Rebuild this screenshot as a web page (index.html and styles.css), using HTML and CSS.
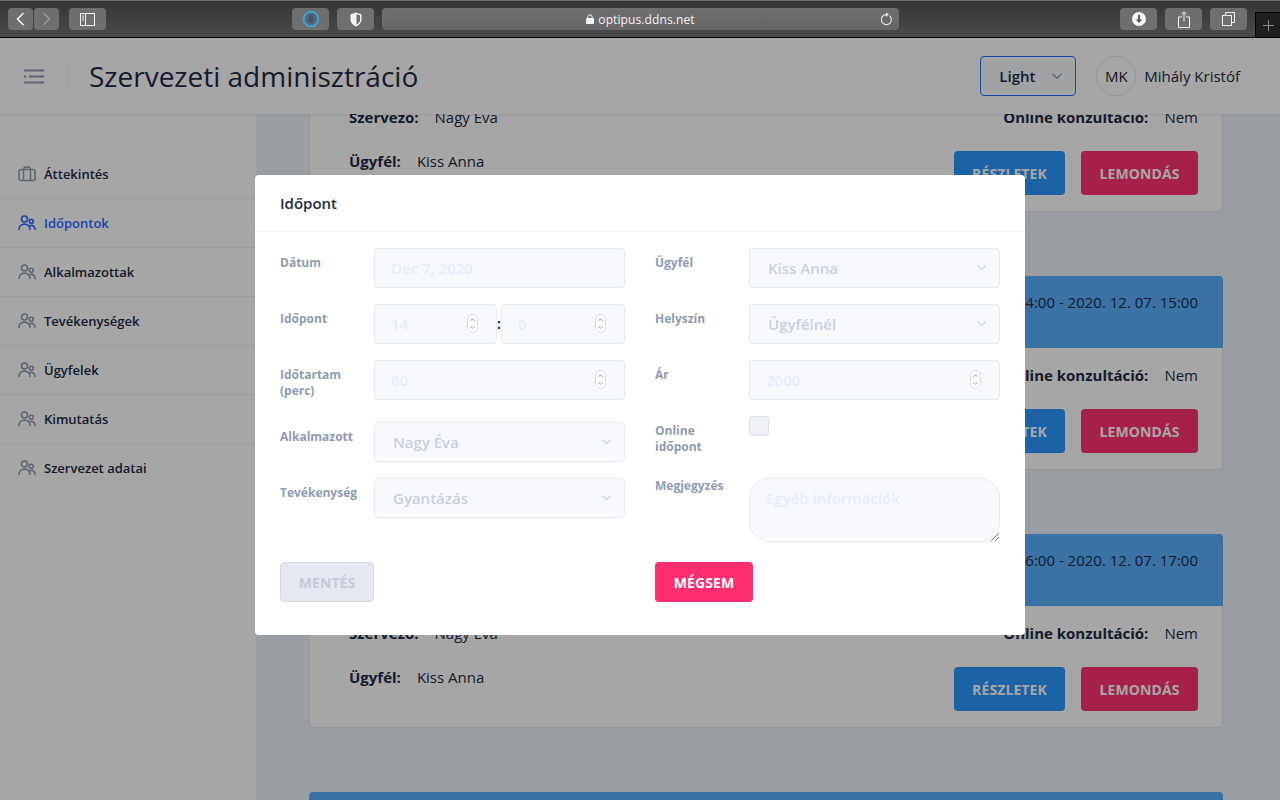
FILE: index.html
```html
<!DOCTYPE html>
<html lang="hu">
<head>
    <meta charset="UTF-8">
    <title>Szervezeti adminisztráció</title>
    <link rel="stylesheet" href="styles.css">
</head>
<body>
    <svg class="defs">
        <symbol id="people" viewBox="0 0 18 18">
            <circle cx="6.5" cy="5" r="3" fill="none" stroke="currentColor" stroke-width="1.6"/>
            <circle cx="13.3" cy="7.3" r="2" fill="none" stroke="currentColor" stroke-width="1.6"/>
            <path d="M1 15.5c0-3.4 2.4-5.4 5.5-5.4s5.500 2 5.500 5.400M12.200 11.500c2.600-.6 4.800.8 4.800 4" fill="none" stroke="currentColor" stroke-width="1.6" stroke-linecap="round"/>
        </symbol>
        <symbol id="chevron" viewBox="0 0 11 7">
            <path d="M1 1l4.500 4.500L10 1" fill="none" stroke="currentColor" stroke-width="1.5" stroke-linecap="round" stroke-linejoin="round"/>
        </symbol>
        <symbol id="spinner" viewBox="0 0 11 19">
            <rect x=".5" y=".5" width="10" height="18" rx="5" fill="#fff" stroke="#d5d9e2"/>
            <path d="M3.200 7l2.300-2.300L7.800 7M3.200 12l2.300 2.300L7.800 12" fill="none" stroke="#8a8f99" stroke-width=".9"/>
        </symbol>
    </svg>

    <div class="browser-bar">
        <div class="nav-buttons">
            <button class="bar-btn nav-btn"><svg width="9" height="14" viewBox="0 0 9 14"><path d="M7.500 1L1.500 7l6 6" fill="none" stroke="#fff" stroke-width="1.4"/></svg></button>
            <button class="bar-btn nav-btn"><svg width="9" height="14" viewBox="0 0 9 14"><path d="M1.500 1l6 6-6 6" fill="none" stroke="#9c9c9c" stroke-width="1.4"/></svg></button>
        </div>
        <button class="bar-btn wide-btn sidebar-btn"><svg width="15" height="13" viewBox="0 0 15 13"><rect x=".5" y=".5" width="14" height="12" fill="none" stroke="#f2f2f2"/><path d="M5.500 .5v12M2 3h2M2 5h2M2 7h2" stroke="#f2f2f2" fill="none"/></svg></button>
        <button class="bar-btn wide-btn ext-btn"><svg width="16" height="16" viewBox="0 0 16 16"><path d="M5 1h6l4 4v6l-4 4H5l-4-4V5z" fill="#556a7c" stroke="#35aeea" stroke-width="1.6"/><ellipse cx="8" cy="8" rx="2.800" ry="4" fill="#47535e"/></svg></button>
        <button class="bar-btn wide-btn ext-btn2"><svg width="12" height="15" viewBox="0 0 12 15"><path d="M6 .5l5.500 2v5c0 3.500-2.500 5.500-5.500 7-3-1.500-5.500-3.500-5.500-7v-5z" fill="#f2f2f2"/><path d="M6.500 2.200l3.600 1.300v4c0 2.500-1.600 4-3.600 5.200z" fill="#6e6e6e"/></svg></button>
        <div class="url-bar">
            <span class="url-text">
                <svg width="8" height="10" viewBox="0 0 8 10"><path d="M1.800 4.500V3a2.200 2.200 0 014.400 0v1.500" fill="none" stroke="#f2f2f2"/><rect y="4" width="8" height="6" rx="1" fill="#f2f2f2"/></svg>
                optipus.ddns.net
            </span>
            <svg class="reload" width="12" height="14" viewBox="0 0 12 14"><path d="M8.800 4a5 5 0 11-3.300-1.400" fill="none" stroke="#e8e8e8" stroke-width="1.100"/><path d="M5 .3L8 2.600 5 4.800z" fill="#e8e8e8"/></svg>
        </div>
        <button class="bar-btn wide-btn dl-btn"><svg width="14" height="14" viewBox="0 0 14 14"><circle cx="7" cy="7" r="7" fill="#f5f5f5"/><path d="M7 3v6.500" stroke="#555" stroke-width="2" fill="none"/><path d="M3.800 7.500h6.400L7 11z" fill="#555"/></svg></button>
        <button class="bar-btn wide-btn share-btn"><svg width="12" height="17" viewBox="0 0 12 17"><path d="M6 10.500V1M3.500 3.300L6 .8l2.500 2.500M4 6H.5v10.500h11V6H8" fill="none" stroke="#f0f0f0"/></svg></button>
        <button class="bar-btn wide-btn tabs-btn"><svg width="13" height="14" viewBox="0 0 13 14"><rect x=".5" y="3.500" width="9" height="10" fill="none" stroke="#f0f0f0"/><path d="M3.500 3.500v-3h9v10h-3" fill="none" stroke="#f0f0f0"/></svg></button>
        <div class="new-tab"><svg width="11" height="11" viewBox="0 0 11 11"><path d="M5.500 0v11M0 5.500h11" stroke="#8c8c8c"/></svg></div>
    </div>

    <div class="app">
        <header class="topbar">
            <div class="menu-icon">
                <svg width="20" height="15" viewBox="0 0 20 15"><path d="M0 1.500h20M5 7.500h15M0 13.500h20M0 7.500h2" stroke="#8f9bb3" stroke-width="2"/></svg>
            </div>
            <h1 class="page-title">Szervezeti adminisztráció</h1>
            <div class="theme-select">
                Light
                <svg class="theme-chevron" width="10" height="7"><use href="#chevron"/></svg>
            </div>
            <div class="avatar">MK</div>
            <span class="user-name">Mihály Kristóf</span>
        </header>

        <div class="layout">
            <nav class="sidebar">
                <a class="nav-item">
                    <svg class="nav-icon" width="18" height="18" viewBox="0 0 18 18"><rect x="1" y="4.500" width="16" height="11" rx="2" fill="none" stroke="currentColor" stroke-width="1.500"/><path d="M6 4.500V3.200C6 2.500 6.500 2 7.200 2h3.600c.7 0 1.200.5 1.200 1.200v1.300M5.500 4.500v11M12.500 4.500v11" fill="none" stroke="currentColor" stroke-width="1.500"/></svg>
                    Áttekintés
                </a>
                <a class="nav-item active"><svg class="nav-icon" width="18" height="18"><use href="#people"/></svg>Időpontok</a>
                <a class="nav-item"><svg class="nav-icon" width="18" height="18"><use href="#people"/></svg>Alkalmazottak</a>
                <a class="nav-item"><svg class="nav-icon" width="18" height="18"><use href="#people"/></svg>Tevékenységek</a>
                <a class="nav-item"><svg class="nav-icon" width="18" height="18"><use href="#people"/></svg>Ügyfelek</a>
                <a class="nav-item"><svg class="nav-icon" width="18" height="18"><use href="#people"/></svg>Kimutatás</a>
                <a class="nav-item"><svg class="nav-icon" width="18" height="18"><use href="#people"/></svg>Szervezet adatai</a>
            </nav>

            <main class="content">
                <div class="card-list">
                    <section class="card">
                        <div class="card-head">2020. 12. 07. 12:00 - 2020. 12. 07. 13:00</div>
                        <div class="card-body">
                            <div class="card-left">
                                <div class="info"><b>Szervező:</b>Nagy Éva</div>
                                <div class="info"><b>Ügyfél:</b>Kiss Anna</div>
                            </div>
                            <div class="card-right">
                                <div class="info"><b>Online konzultáció:</b>Nem</div>
                                <div class="card-actions">
                                    <button class="btn btn-info">RÉSZLETEK</button>
                                    <button class="btn btn-danger">LEMONDÁS</button>
                                </div>
                            </div>
                        </div>
                    </section>
                    <section class="card">
                        <div class="card-head">2020. 12. 07. 14:00 - 2020. 12. 07. 15:00</div>
                        <div class="card-body">
                            <div class="card-left">
                                <div class="info"><b>Szervező:</b>Nagy Éva</div>
                                <div class="info"><b>Ügyfél:</b>Kiss Anna</div>
                            </div>
                            <div class="card-right">
                                <div class="info"><b>Online konzultáció:</b>Nem</div>
                                <div class="card-actions">
                                    <button class="btn btn-info">RÉSZLETEK</button>
                                    <button class="btn btn-danger">LEMONDÁS</button>
                                </div>
                            </div>
                        </div>
                    </section>
                    <section class="card">
                        <div class="card-head">2020. 12. 07. 16:00 - 2020. 12. 07. 17:00</div>
                        <div class="card-body">
                            <div class="card-left">
                                <div class="info"><b>Szervező:</b>Nagy Éva</div>
                                <div class="info"><b>Ügyfél:</b>Kiss Anna</div>
                            </div>
                            <div class="card-right">
                                <div class="info"><b>Online konzultáció:</b>Nem</div>
                                <div class="card-actions">
                                    <button class="btn btn-info">RÉSZLETEK</button>
                                    <button class="btn btn-danger">LEMONDÁS</button>
                                </div>
                            </div>
                        </div>
                    </section>
                    <section class="card">
                        <div class="card-head"></div>
                    </section>
                </div>
            </main>
        </div>

        <div class="backdrop">
            <div class="modal">
                <div class="modal-title">Időpont</div>
                <div class="modal-body">
                    <div class="form-grid">
                        <div class="form-col">
                            <div class="form-row">
                                <label class="form-label">Dátum</label>
                                <div class="control input-like">Dec 7, 2020</div>
                            </div>
                            <div class="form-row">
                                <label class="form-label">Időpont</label>
                                <div class="time-group">
                                    <div class="control input-like">14<svg class="spin" width="11" height="19"><use href="#spinner"/></svg></div>
                                    <span class="time-sep">:</span>
                                    <div class="control input-like">0<svg class="spin" width="11" height="19"><use href="#spinner"/></svg></div>
                                </div>
                            </div>
                            <div class="form-row">
                                <label class="form-label">Időtartam (perc)</label>
                                <div class="control input-like">60<svg class="spin" width="11" height="19"><use href="#spinner"/></svg></div>
                            </div>
                            <div class="form-row">
                                <label class="form-label">Alkalmazott</label>
                                <div class="control select-like">Nagy Éva<svg class="chev" width="9" height="6"><use href="#chevron"/></svg></div>
                            </div>
                            <div class="form-row">
                                <label class="form-label">Tevékenység</label>
                                <div class="control select-like">Gyantázás<svg class="chev" width="9" height="6"><use href="#chevron"/></svg></div>
                            </div>
                        </div>
                        <div class="form-col">
                            <div class="form-row">
                                <label class="form-label">Ügyfél</label>
                                <div class="control select-like">Kiss Anna<svg class="chev" width="9" height="6"><use href="#chevron"/></svg></div>
                            </div>
                            <div class="form-row">
                                <label class="form-label">Helyszín</label>
                                <div class="control select-like">Ügyfélnél<svg class="chev" width="9" height="6"><use href="#chevron"/></svg></div>
                            </div>
                            <div class="form-row">
                                <label class="form-label">Ár</label>
                                <div class="control input-like">2000<svg class="spin" width="11" height="19"><use href="#spinner"/></svg></div>
                            </div>
                            <div class="form-row">
                                <label class="form-label">Online időpont</label>
                                <div class="checkbox"></div>
                            </div>
                            <div class="form-row">
                                <label class="form-label form-label-top">Megjegyzés</label>
                                <div class="textarea-like">
                                    Egyéb információk
                                    <svg class="grip" width="8" height="8" viewBox="0 0 8 8"><path d="M0 8l8-8M4 8l4-4" stroke="#555" stroke-width=".8"/></svg>
                                </div>
                            </div>
                        </div>
                    </div>
                    <div class="form-grid form-actions">
                        <div><button class="btn btn-disabled">MENTÉS</button></div>
                        <div><button class="btn btn-cancel">MÉGSEM</button></div>
                    </div>
                </div>
            </div>
        </div>
    </div>
</body>
</html>
```

FILE: styles.css
```css
* {
    box-sizing: border-box;
}
html, body {
    height: 100%;
}
body {
    font-family: "Open Sans", "Liberation Sans", sans-serif;
    margin: 0;
    display: flex;
    flex-direction: column;
    overflow: hidden;
    color: #222b45;
}
button {
    font-family: inherit;
    border: 0;
}
.defs {
    display: none;
}

/* browser toolbar */
.browser-bar {
    height: 38px;
    flex: none;
    display: flex;
    padding-top: 7px;
    background: linear-gradient(#363636, #4b4b4b);
    border-top: 1px solid #6c6c6c;
    border-bottom: 1px solid #000;
}
.bar-btn {
    height: 22px;
    background: #6f6f6f;
    border-radius: 4px;
    display: flex;
    align-items: center;
    justify-content: center;
    padding: 0;
}
.nav-buttons {
    display: flex;
    gap: 1px;
    margin-left: 8px;
}
.nav-btn {
    width: 25px;
}
.wide-btn {
    width: 37px;
}
.sidebar-btn {
    margin-left: 10px;
}
.ext-btn {
    margin-left: 186px;
}
.ext-btn2 {
    margin-left: 8px;
}
.url-bar {
    width: 517px;
    height: 22px;
    margin-left: 8px;
    border-radius: 4px;
    background: linear-gradient(#707070, #666);
    display: flex;
    align-items: center;
    justify-content: center;
    position: relative;
}
.url-text {
    font-size: 12px;
    font-weight: 500;
    letter-spacing: 0.1px;
    color: #f4f4f4;
    display: flex;
    align-items: center;
    gap: 4px;
}
.reload {
    position: absolute;
    right: 6px;
    top: 4px;
}
.dl-btn {
    margin-left: 221px;
}
.share-btn, .tabs-btn {
    margin-left: 8px;
}
.new-tab {
    width: 25px;
    height: 25px;
    margin-left: 8px;
    margin-top: 4px;
    background: #1f1f1f;
    border-top: 1px solid #000;
    border-left: 1px solid #000;
    display: flex;
    align-items: center;
    justify-content: center;
}

/* app */
.app {
    flex: 1;
    position: relative;
    display: flex;
    flex-direction: column;
    overflow: hidden;
    background: #edf1f9;
}
.topbar {
    height: 76px;
    flex: none;
    display: flex;
    align-items: center;
    padding: 0 40px 0 24px;
    background: #fff;
    box-shadow: 0 1px 2px rgba(44, 51, 73, 0.1);
    position: relative;
    z-index: 2;
}
.menu-icon {
    width: 45px;
    height: 22px;
    border-right: 1px solid #edf1f7;
    display: flex;
    align-items: center;
}
.page-title {
    margin: 0 0 0 20px;
    font-size: 28px;
    font-weight: 400;
    flex: 1;
}
.theme-select {
    width: 96px;
    height: 40px;
    padding-left: 18px;
    display: flex;
    align-items: center;
    font-size: 15px;
    font-weight: 600;
    background: #f7f9fc;
    border: 1px solid #3366ff;
    border-radius: 4px;
    position: relative;
}
.theme-chevron {
    position: absolute;
    right: 13px;
    top: 16px;
    color: #8f9bb3;
}
.avatar {
    width: 40px;
    height: 40px;
    margin-left: 20px;
    border: 1px solid #e6e6e6;
    border-radius: 50%;
    font-size: 15px;
    text-align: center;
    line-height: 38px;
}
.user-name {
    margin-left: 8px;
    font-size: 15px;
}

.layout {
    flex: 1;
    display: flex;
    min-height: 0;
}
.sidebar {
    width: 256px;
    flex: none;
    padding-top: 36px;
    background: #fff;
}
.nav-item {
    height: 49px;
    display: flex;
    align-items: center;
    gap: 8px;
    padding: 0 0 1px 18px;
    font-size: 13px;
    font-weight: 600;
    border-bottom: 1px solid #edf1f7;
}
.nav-item:last-child {
    border-bottom: 0;
}
.nav-icon {
    color: #8f9bb3;
}
.nav-item.active, .nav-item.active .nav-icon {
    color: #3366ff;
}

.content {
    flex: 1;
    overflow: hidden;
    padding: 0 57px 0 53px;
}
.card-list {
    margin-top: -96px;
    display: flex;
    flex-direction: column;
    gap: 64px;
}
.card {
    flex: none;
}
.card-head {
    height: 72px;
    padding: 16px 25px 0 0;
    background: #59afff;
    border-radius: 4px 4px 0 0;
    font-size: 15px;
    line-height: 20px;
    text-align: right;
}
.card-body {
    height: 122px;
    padding: 17px 24px 0 39px;
    background: #fff;
    border: 1px solid #e3e6ec;
    border-top: 0;
    border-radius: 0 0 4px 4px;
    display: flex;
    justify-content: space-between;
}
.card-left, .card-right {
    display: flex;
    flex-direction: column;
    gap: 24px;
}
.card-right {
    align-items: flex-end;
}
.info {
    font-size: 15px;
    line-height: 20px;
}
.info b {
    font-weight: 700;
    margin-right: 16px;
}
.card-actions {
    display: flex;
    gap: 16px;
}
.btn {
    height: 44px;
    padding: 0;
    border-radius: 4px;
    font-size: 14px;
    font-weight: 700;
    letter-spacing: 0.1px;
    color: #fff;
}
.btn-info {
    width: 111px;
    background: #2a97ff;
}
.btn-danger {
    width: 117px;
    background: #ff3470;
}

/* modal */
.backdrop {
    position: absolute;
    inset: 0;
    z-index: 5;
    background: rgba(0, 0, 0, 0.35);
    padding-top: 137px;
    display: flex;
    justify-content: center;
    align-items: flex-start;
}
.modal {
    width: 770px;
    height: 460px;
    background: #fff;
    border-radius: 4px;
}
.modal-title {
    height: 57px;
    padding: 18px 25px 0;
    font-size: 15px;
    font-weight: 600;
    line-height: 20px;
    border-bottom: 1px solid #edf1f7;
}
.modal-body {
    padding: 16px 25px 0;
}
.form-grid {
    display: grid;
    grid-template-columns: 345px 345px;
    column-gap: 30px;
}
.form-col {
    display: flex;
    flex-direction: column;
    gap: 16px;
}
.form-row {
    display: flex;
}
.form-label {
    width: 94px;
    flex: none;
    padding: 7px 16px 7px 0;
    font-size: 12px;
    font-weight: 700;
    line-height: 16px;
    color: #8f9bb3;
}
.form-label-top {
    padding-top: 0;
}
.control {
    flex: 1;
    height: 40px;
    display: flex;
    align-items: center;
    justify-content: space-between;
    background: #f7f9fc;
    border: 1px solid #e6eaf2;
    border-radius: 4px;
    font-size: 15px;
    font-weight: 600;
}
.input-like {
    padding: 0 18px 1px 16px;
    color: #e6edfb;
}
.select-like {
    padding: 0 13px 1px 18px;
    color: #c9cfde;
}
.spin, .chev {
    flex: none;
}
.chev {
    color: #c9cfdc;
}
.time-group {
    flex: 1;
    display: grid;
    grid-template-columns: 123px 1fr;
    column-gap: 4px;
    position: relative;
}
.time-sep {
    position: absolute;
    left: 123px;
    width: 4px;
    top: 10px;
    font-size: 14px;
    font-weight: 700;
    line-height: 20px;
    text-align: center;
}
.checkbox {
    width: 20px;
    height: 20px;
    background: #eef0f5;
    border: 1px solid #dde1ea;
    border-radius: 3px;
}
.textarea-like {
    flex: 1;
    height: 64px;
    padding: 9px 16px;
    background: #f7f9fc;
    border: 1px solid #e6eaf2;
    border-radius: 20px;
    font-size: 15px;
    font-weight: 600;
    line-height: 20px;
    color: #e6edfb;
    position: relative;
}
.grip {
    position: absolute;
    right: 0;
    bottom: 0;
}
.form-actions {
    margin-top: 20px;
}
.btn-disabled {
    width: 94px;
    height: 40px;
    background: #e4e7ef;
    border: 1px solid #d5d9e4;
    color: #c4cad9;
}
.btn-cancel {
    width: 98px;
    height: 40px;
    background: #ff2f6f;
}
```
